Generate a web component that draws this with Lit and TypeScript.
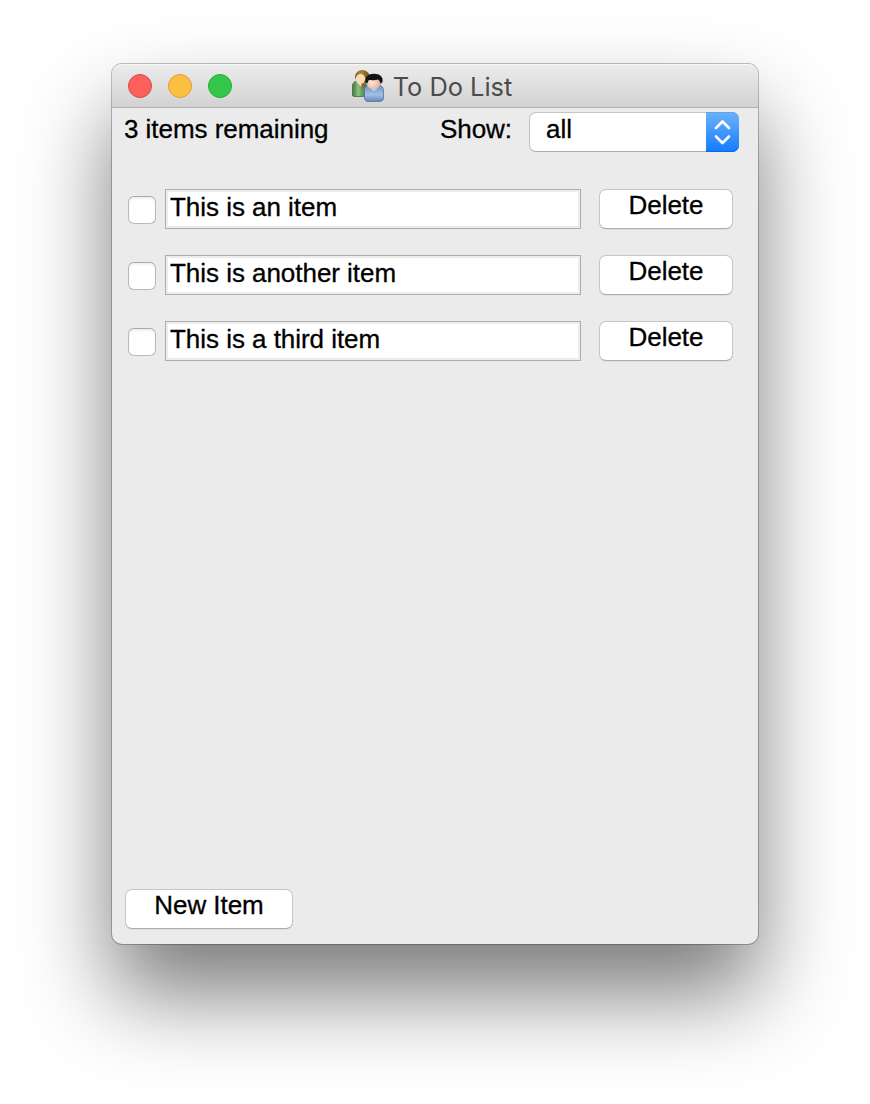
import { LitElement, html, css, svg } from "lit";
import { customElement, state } from "lit/decorators.js";

const usersIcon = svg`
  <defs>
    <linearGradient id="green" x1="0" y1="0" x2="1" y2="0">
      <stop offset="0" stop-color="#3c7a38"/><stop offset=".35" stop-color="#8cc07f"/><stop offset=".8" stop-color="#3a8038"/>
    </linearGradient>
    <linearGradient id="blue" x1="0" y1="0" x2="0" y2="1">
      <stop offset="0" stop-color="#6f93c6"/><stop offset=".6" stop-color="#a3bee3"/><stop offset="1" stop-color="#6384b6"/>
    </linearGradient>
    <radialGradient id="face" cx=".4" cy=".5" r=".6">
      <stop offset="0" stop-color="#ffe9dc"/><stop offset="1" stop-color="#e3ab98"/>
    </radialGradient>
    <radialGradient id="hair" cx=".4" cy=".25" r=".7">
      <stop offset="0" stop-color="#b08a3c"/><stop offset="1" stop-color="#5f4315"/>
    </radialGradient>
  </defs>
  <path d="M.5 25V16C.5 12.500 3 11 6 11h6c3 0 5 3 5 7v8.500H2.500C1 26.500.5 26 .5 25z" fill="url(#green)" stroke="#3f6b3d" stroke-width=".8"/>
  <path d="M5 12.500l4 4 4-3z" fill="#dfe8d6"/>
  <path d="M9 13h3v4l-2 1.500z" fill="#c9443c"/>
  <ellipse cx="10.300" cy="6.500" rx="7.300" ry="6.500" fill="url(#hair)"/>
  <ellipse cx="8.500" cy="9" rx="4.700" ry="5" fill="#f8dcb6"/>
  <path d="M12.500 28v-7.500c0-4 2.500-5.500 5.500-5.500h8c3 0 5.500 2 5.500 6V28.500c0 2-2 3-4 3H16c-2 0-3.500-1.500-3.500-3.500z" fill="url(#blue)" stroke="#56759f" stroke-width=".8"/>
  <path d="M16.500 17h10.500l-5 4z" fill="#c3d5ee"/>
  <ellipse cx="21.500" cy="13" rx="7.200" ry="6" fill="url(#face)"/>
  <path d="M13.500 12C13 7 16 3.800 22 3.800S31.500 7 30.500 12L28.500 14c0-2-1-3.500-2.500-4.500-3 1-7 .5-9 .5-1 1-1.300 2.500-1.500 3.500z" fill="#15120f"/>
`;

@customElement("app-root")
export class AppRoot extends LitElement {
  @state() private items = ["This is an item", "This is another item", "This is a third item"];

  static styles = css`
    :host { display: block; height: 1104px; padding: 64px 112px 160px; box-sizing: border-box; overflow: hidden;
      background: #fff; font: 26px/30px "Liberation Sans", Arial, sans-serif; color: #000; }
    * { box-sizing: border-box; }
    .window { height: 880px; display: flex; flex-direction: column; border-radius: 10px; background: #ebebeb;
      box-shadow: 0 0 0 1px rgba(0,0,0,.24), 0 50px 88px rgba(0,0,0,.52); }
    .titlebar { height: 44px; flex: none; display: grid; grid-template-columns: 1fr auto 1fr; align-items: center;
      padding: 0 16px; border-bottom: 1px solid #b1b1b1; border-radius: 10px 10px 0 0;
      background: linear-gradient(#ececec, #d2d2d2); box-shadow: inset 0 1px #f6f6f6; }
    .lights { display: flex; gap: 16px; }
    .light { width: 24px; height: 24px; border-radius: 50%; border: 1px solid; }
    .close { background: #fc605c; border-color: #de4744; }
    .minimize { background: #fdbf41; border-color: #dd9e33; }
    .zoom { background: #34c84a; border-color: #26a934; }
    .title { display: flex; align-items: center; gap: 9px; margin-right: 6px; font: 25.4px/30px Inter, sans-serif;
      color: #4b4b4b; }
    .name { padding-top: 2px; }
    .icon { width: 32px; height: 32px; display: block; }
    .content { flex: 1; display: flex; flex-direction: column; padding: 4px 19px 15px 12px;
      letter-spacing: -.04px; -webkit-text-stroke: .3px #000; }
    .toolbar { display: flex; height: 40px; }
    .label { padding-top: 2px; white-space: nowrap; }
    .show { margin-left: auto; margin-right: 17px; }
    .select { width: 210px; height: 40px; display: flex; justify-content: space-between; padding: 1px 0 0 16px;
      background: #fff; border: 1px solid #c4c4c4; border-bottom-color: #acacac; border-right: 0; border-radius: 7px; }
    .arrows { width: 33px; height: 40px; margin-top: -2px; border-radius: 0 7px 7px 0; display: block;
      background: linear-gradient(#6bb3fa, #147bfd); box-shadow: inset 0 -1px #0f68e6, inset 0 1px #62a5ee; }
    .list { display: flex; flex-direction: column; gap: 26px; padding: 37px 6px 0 4px; }
    .row { display: flex; align-items: flex-start; }
    .check { width: 28px; height: 28px; margin: 7px 9px 0 0; border-radius: 6px; background: #fff;
      border: 1px solid #b9b9b9; border-top-color: #a9a9a9; box-shadow: inset 0 2px 2px #f0f0f0; }
    .field { width: 416px; height: 40px; margin-right: 18px; padding: 2px 4px; background: #fff;
      border: 1px solid #adadad; box-shadow: inset 0 0 0 2px #ededed; }
    .button { height: 40px; border-radius: 7px; background: #fff; border: 1px solid #c6c6c6;
      border-bottom-color: #acacac; text-align: center; box-shadow: 0 1px 1px rgba(0,0,0,.06); }
    .delete { width: 134px; }
    .new { width: 168px; margin: auto 0 0 1px; }
  `;

  private remove(index: number) {
    this.items = this.items.filter((_, i) => i !== index);
  }

  render() {
    return html`
      <div class="window">
        <div class="titlebar">
          <div class="lights">
            <span class="light close"></span><span class="light minimize"></span><span class="light zoom"></span>
          </div>
          <div class="title"><svg class="icon" viewBox="0 0 32 32">${usersIcon}</svg><span class="name">To Do List</span></div>
        </div>
        <div class="content">
          <div class="toolbar">
            <div class="label">${this.items.length} items remaining</div>
            <div class="label show">Show:</div>
            <div class="select">
              <span>all</span>
              <svg class="arrows" viewBox="0 0 33 40" fill="none" stroke="#fff" stroke-width="2.600" stroke-linecap="round" stroke-linejoin="round">
                <path d="M10 16l6.500-6.500L23 16M10 24.500l6.500 6.500L23 24.500"/>
              </svg>
            </div>
          </div>
          <div class="list">
            ${this.items.map((text, i) => html`
              <div class="row">
                <div class="check" role="checkbox" aria-checked="false"></div>
                <div class="field">${text}</div>
                <div class="button delete" role="button" @click=${() => this.remove(i)}>Delete</div>
              </div>`)}
          </div>
          <div class="button new" role="button">New Item</div>
        </div>
      </div>`;
  }
}
